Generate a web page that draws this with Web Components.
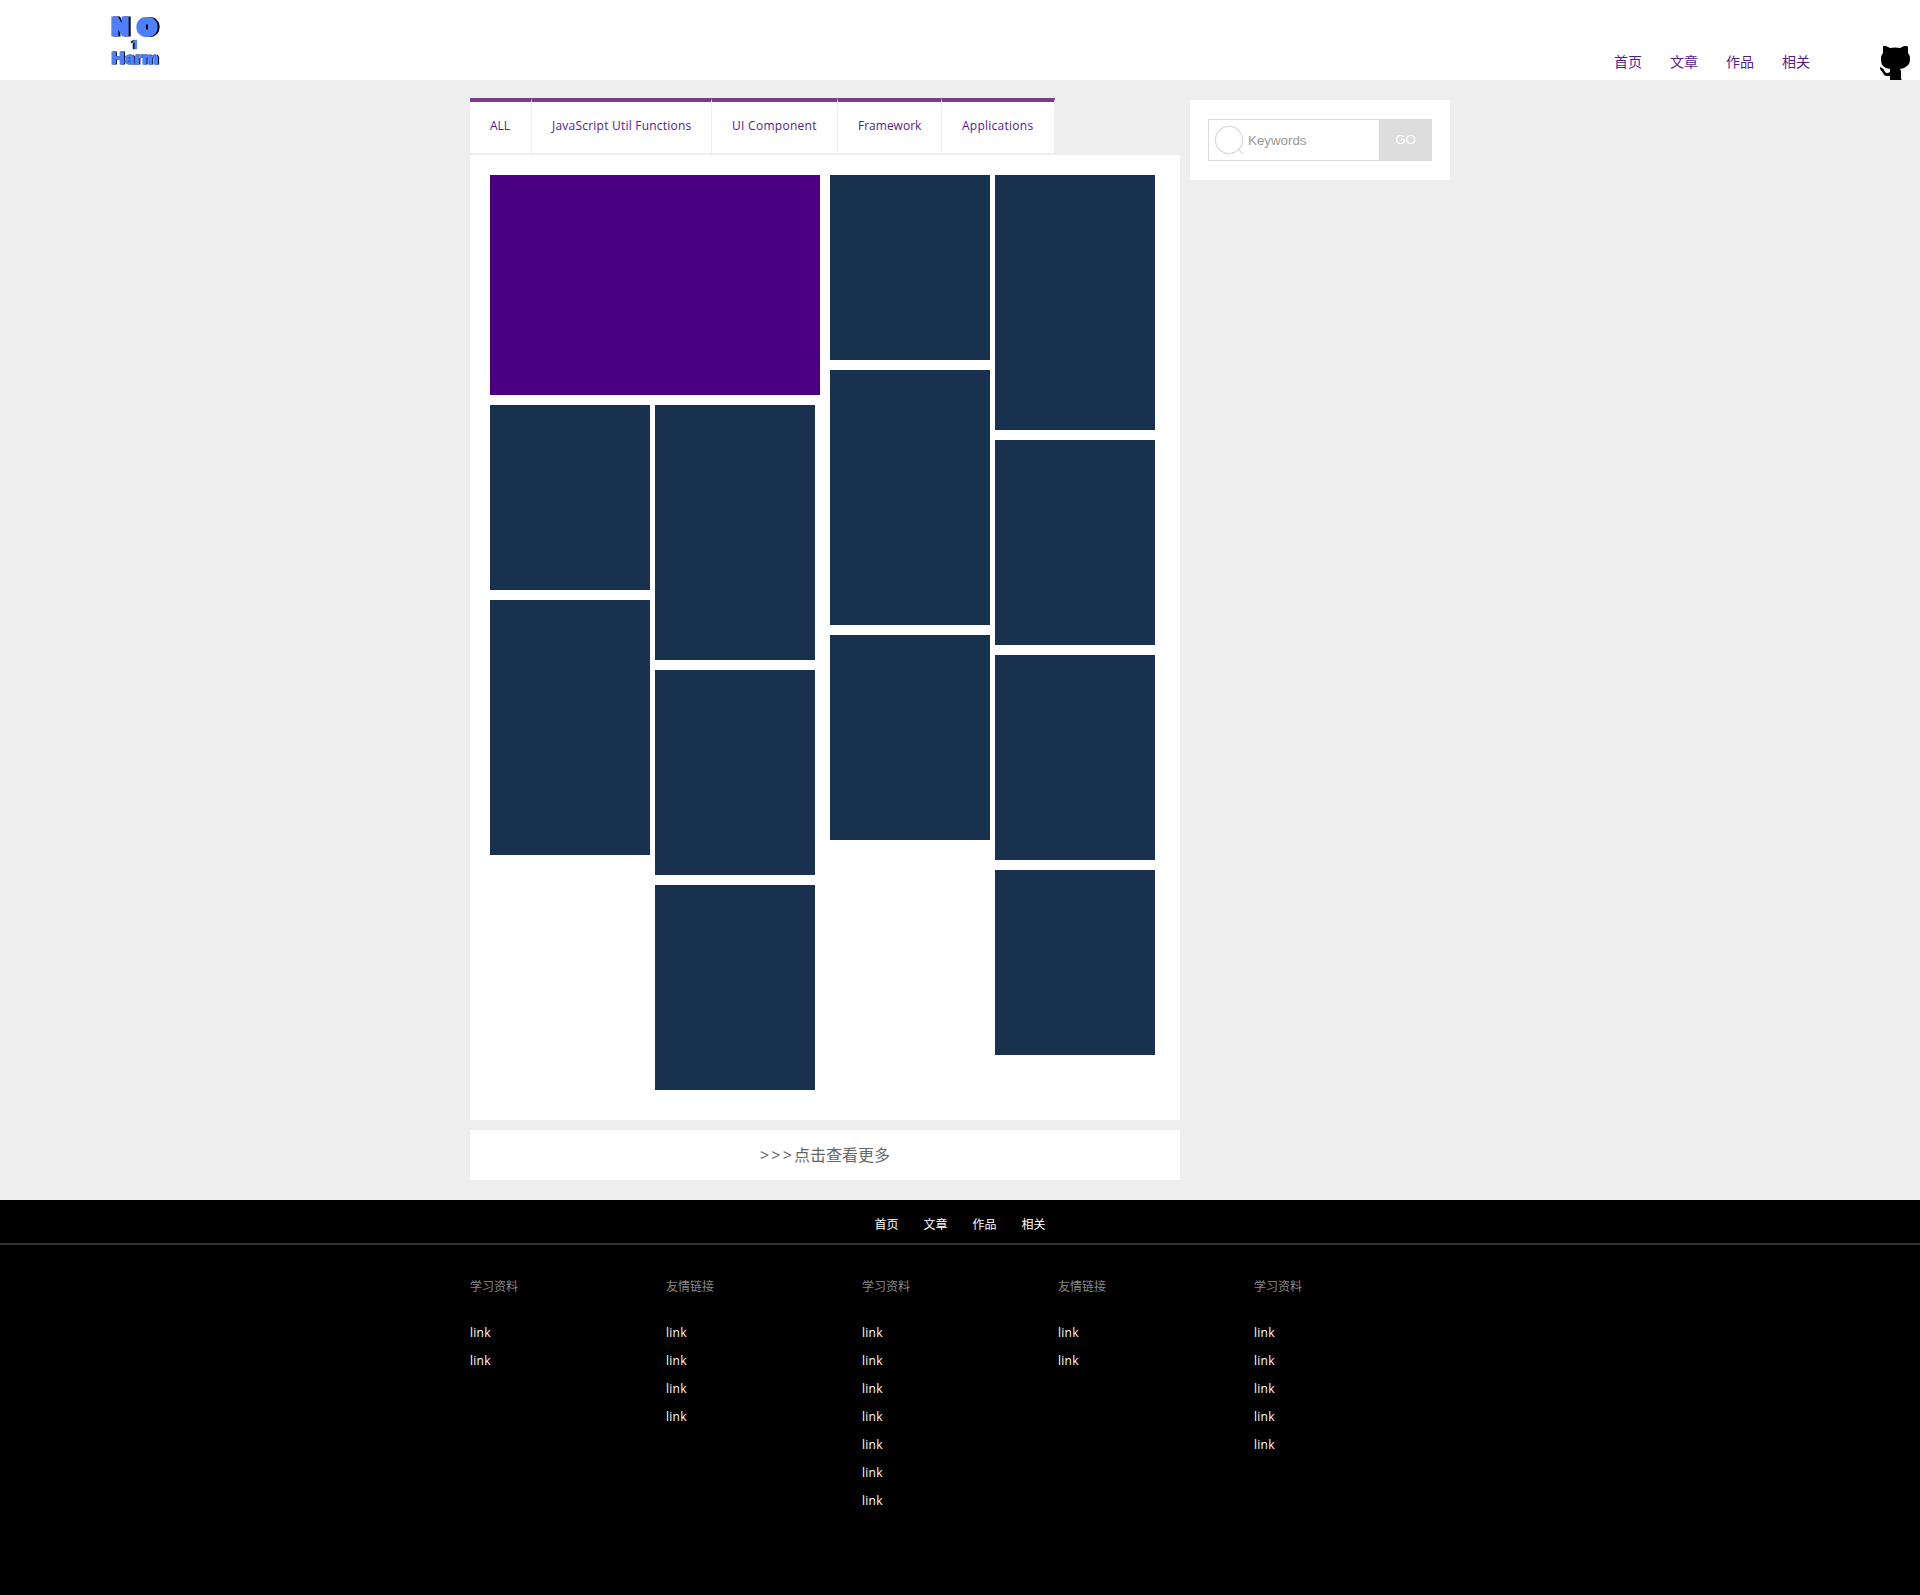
<!DOCTYPE html>
<html lang="zh-CN">
<head>
<meta charset="utf-8">
<title>No1Harm</title>
<style>
body{margin:0;background:#eee;font-family:"Open Sans","Noto Sans CJK SC",sans-serif;font-size:12px}
</style>
</head>
<body>
<site-page></site-page>
<script>
const define=(name,html)=>customElements.define(name,class extends HTMLElement{
  constructor(){super();this.attachShadow({mode:'open'});}
  connectedCallback(){const t=document.createElement('template');t.innerHTML=typeof html==='function'?html(this):html;this.shadowRoot.replaceChildren(t.content.cloneNode(true));}
});

define('site-logo',`<style>:host{display:block;width:60px;height:72px}svg{display:block}
text{font-family:"Roboto","Liberation Sans",sans-serif;font-weight:900;fill:#4d80ff;stroke:#4d80ff;stroke-linejoin:miter}
.right{filter:drop-shadow(2px 0 0 #000)}.near{filter:drop-shadow(1px 0 0 #000)}.left{filter:drop-shadow(-1.5px 0 0 #123)}</style>
<svg width="60" height="72" viewBox="106 4 60 72">
<g class="right"><text x="111.4" y="35.4" font-size="23" stroke-width="2.8" textLength="17" lengthAdjust="spacingAndGlyphs">N</text><text x="138" y="35" font-size="22" stroke-width="4.2" textLength="18" lengthAdjust="spacingAndGlyphs">O</text></g>
<text class="left" x="132" y="48.5" font-size="12" stroke-width=".3">1</text>
<text class="near" x="111" y="64.4" font-size="16.5" stroke-width=".9" textLength="47.5" lengthAdjust="spacingAndGlyphs">Harm</text>
</svg>`);

define('github-mark',`<style>:host{display:block;width:30px;height:34px}svg{display:block}</style>
<svg width="30" height="34" viewBox="0 0 30 34"><path d="M3 0H6L10 2Q15 1 20 2L24 0H27L28 1V7Q30 9 30 13Q30 18 27 20Q24 23 20 23L21 25V33L22 34H10V30H7Q4 30 3 27L0 23V21L2 22Q4 23 5 26Q7 28 10 26V23Q6 23 3 20Q1 18 1 13Q1 9 3 7Z"/></svg>`);

define('nav-links',`<style>:host{display:flex;gap:var(--gap,28px);font-size:var(--size,14px);line-height:20px;color:var(--ink,#551a8b)}a{white-space:nowrap}</style>
${['首页','文章','作品','相关'].map(t=>`<a>${t}</a>`).join('')}`);

define('site-header',`<style>:host{display:flex;height:80px;background:#fff;box-sizing:border-box;padding:0 10px 0 106px;align-items:flex-start}
site-logo{margin-top:4px}nav-links{margin:52px 70px 0 auto}github-mark{margin-top:46px}</style>
<site-logo></site-logo><nav-links></nav-links><github-mark></github-mark>`);

define('tab-item',`<style>:host{display:block;box-sizing:border-box;height:55px;border-top:4px solid #7a3b87;border-right:1px solid #eee;background:#fff;padding:14px 0 0 20px;line-height:20px;color:#551a8b;white-space:nowrap}</style><slot></slot>`);

define('tab-bar',`<style>:host{display:flex;height:57px}</style>
<tab-item style="width:62px">ALL</tab-item><tab-item style="width:180px;letter-spacing:.22px">JavaScript Util Functions</tab-item><tab-item style="width:126px;letter-spacing:.28px">UI Component</tab-item><tab-item style="width:104px">Framework</tab-item><tab-item style="width:113px;letter-spacing:.25px">Applications</tab-item>`);

define('tile-column',el=>`<style>:host{display:flex;flex-direction:column;gap:10px;width:160px}div{background:#18314f}</style>
${el.getAttribute('heights').split(' ').map(h=>`<div style="height:${h}px"></div>`).join('')}`);

define('work-gallery',`<style>:host{display:flex;gap:10px;box-sizing:border-box;height:965px;padding:20px;background:#fff}
.half{width:330px}.cols{display:flex;gap:5px}.hero{height:220px;background:#4b0082;margin-bottom:10px}</style>
<div class="half"><div class="hero"></div><div class="cols"><tile-column heights="185 255"></tile-column><tile-column heights="255 205 205"></tile-column></div></div>
<div class="half"><div class="cols"><tile-column heights="185 255 205"></tile-column><tile-column heights="255 205 205 185"></tile-column></div></div>`);

define('more-button',`<style>:host{display:block;margin-top:10px;height:50px;line-height:50px;background:#fff;color:#666;text-align:center;font-size:16px}span{letter-spacing:2.2px}</style><span>&gt;&gt;&gt;</span>点击查看更多`);

define('search-box',`<style>:host{display:flex;box-sizing:border-box;width:260px;height:80px;padding:19px 18px;background:#fff;font:13.333px "Liberation Sans",Arial,sans-serif}
.field{display:flex;align-items:center;box-sizing:border-box;width:171px;height:42px;border:1px solid #ddd;border-right:0;color:#999;padding-left:5px}
.go{width:53px;height:42px;line-height:42px;background:#ddd;color:#fff;text-align:center}svg{margin-right:4px}</style>
<div class="field"><svg width="30" height="30" viewBox="0 0 30 30" fill="none" stroke="#ddd" stroke-width="1.4"><circle cx="15" cy="15" r="13.6"/><path d="M24.5 24.5L28.8 28.8"/></svg><span>Keywords</span></div><div class="go">GO</div>`);

define('link-group',el=>`<style>:host{display:block;width:196px;color:#fff}h4{margin:0 0 22px;font:inherit;line-height:20px;color:#888}a{display:block;height:28px;line-height:28px;letter-spacing:.25px}</style>
<h4>${el.getAttribute('heading')}</h4>${'<a>link</a>'.repeat(+el.getAttribute('count'))}`);

define('site-footer',`<style>:host{display:block;height:395px;background:#000}
.top{display:flex;justify-content:center;height:45px;box-sizing:border-box;padding-top:15px;border-bottom:2px solid #333}
nav-links{--gap:25px;--size:12px;--ink:#fff}.groups{display:flex;width:980px;padding:32px 0 0 470px}</style>
<div class="top"><nav-links></nav-links></div>
<div class="groups"><link-group heading="学习资料" count="2"></link-group><link-group heading="友情链接" count="4"></link-group><link-group heading="学习资料" count="7"></link-group><link-group heading="友情链接" count="2"></link-group><link-group heading="学习资料" count="5"></link-group></div>`);

define('site-page',`<style>:host{display:block}main{display:flex;gap:10px;width:980px;margin:0 auto;height:1120px;box-sizing:border-box;padding-top:18px}.main{width:710px}search-box{margin-top:2px}</style>
<site-header></site-header><main><div class="main"><tab-bar></tab-bar><work-gallery></work-gallery><more-button></more-button></div><search-box></search-box></main><site-footer></site-footer>`);
</script>
</body>
</html>
